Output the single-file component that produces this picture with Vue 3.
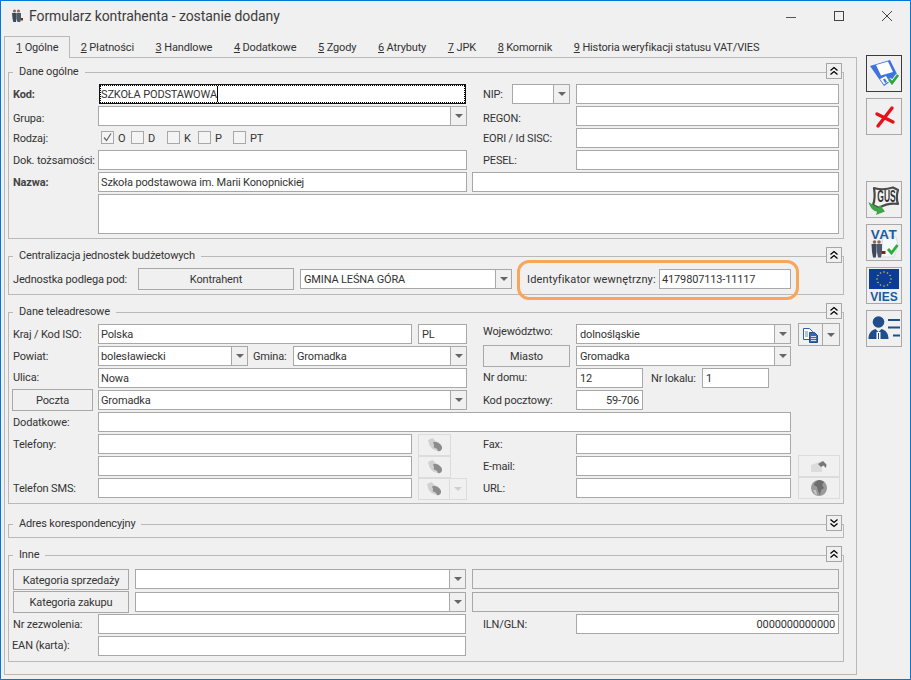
<script setup>
const tabs = [
  ['1', 'Ogólne'], ['2', 'Płatności'], ['3', 'Handlowe'], ['4', 'Dodatkowe'], ['5', 'Zgody'],
  ['6', 'Atrybuty'], ['7', 'JPK'], ['8', 'Komornik'], ['9', 'Historia weryfikacji statusu VAT/VIES'],
]
const stars = Array.from({ length: 12 }, (_, i) => {
  const a = (i * Math.PI) / 6
  return { x: 17 + 7 * Math.cos(a), y: 11 + 7 * Math.sin(a) }
})
</script>

<template>
  <div class="window">
    <header class="titlebar">
      <svg class="app-icon" width="12" height="14" viewBox="0 0 12 14">
        <circle cx="3.500" cy="2" r="1.600" fill="#8a6a58" /><circle cx="7.500" cy="2" r="1.600" fill="#8a6a58" />
        <path d="M1 4h4.500v5.500L5 13H2.300L1.500 9.500z" fill="#3c4a5c" />
        <path d="M5.500 4H10v5.500L9.300 13H6.500L5.500 9.500z" fill="#4c5a6e" />
        <rect x="9.500" y="9" width="2.500" height="2.500" fill="#7a3020" />
      </svg>
      <span class="title">Formularz kontrahenta - zostanie dodany</span>
      <div class="wincontrols">
        <svg width="48" height="32" viewBox="0 0 48 32"><path d="M20 16.500h10" stroke="#555" /></svg>
        <svg width="48" height="32" viewBox="0 0 48 32"><rect x="20.500" y="10.500" width="9" height="9" fill="none" stroke="#444" /></svg>
        <svg width="48" height="32" viewBox="0 0 48 32"><path d="M20 10l10 10M30 10L20 20" stroke="#444" /></svg>
      </div>
    </header>

    <div class="body">
      <main class="content">
        <nav class="tabs">
          <div v-for="(t, i) in tabs" :key="t[0]" class="tab" :class="{ active: i === 0 }"><u>{{ t[0] }}</u> {{ t[1] }}</div>
        </nav>

        <div class="panel">
          <section class="group g1">
            <span class="legend">Dane ogólne</span>
            <button class="chev"><svg width="14" height="14" viewBox="0 0 14 14"><path d="M3.500 6.500L7 3.500l3.500 3M3.500 10.500L7 7.500l3.500 3" fill="none" stroke="#000" stroke-width="1.300" /></svg></button>

            <label class="lbl bold r1 a">Kod:</label>
            <div class="field focus r1 b"><span>SZKOŁA PODSTAWOWA</span><i class="caret"></i></div>
            <label class="lbl r1 nipl">NIP:</label>
            <div class="field combo r1 nipc"><span></span><b class="arrow"></b></div>
            <div class="field r1 rt"></div>

            <label class="lbl dn r2 a">Grupa:</label>
            <div class="field combo r2 b"><span></span><b class="arrow"></b></div>
            <label class="lbl dn r2 nipw">REGON:</label>
            <div class="field r2 rt"></div>

            <label class="lbl r3 a">Rodzaj:</label>
            <div class="checks r3 b">
              <span class="chk"><i class="box on"><svg width="11" height="11" viewBox="0 0 11 11"><path d="M2 5.500l2.500 3L9 1.500" fill="none" stroke="#666" stroke-width="1.200" /></svg></i>O</span>
              <span class="chk"><i class="box"></i>D</span>
              <span class="chk"><i class="box"></i>K</span>
              <span class="chk"><i class="box"></i>P</span>
              <span class="chk"><i class="box"></i>PT</span>
            </div>
            <label class="lbl r3 nipw">EORI / Id SISC:</label>
            <div class="field r3 rt"></div>

            <label class="lbl r4 a">Dok. tożsamości:</label>
            <div class="field r4 b"></div>
            <label class="lbl r4 nipw">PESEL:</label>
            <div class="field r4 rt"></div>

            <label class="lbl bold r5 a">Nazwa:</label>
            <div class="field r5 b"><span>Szkoła podstawowa im. Marii Konopnickiej</span></div>
            <div class="field r5 name2"></div>

            <div class="field r6 wide"></div>
          </section>

          <section class="group g2">
            <span class="legend">Centralizacja jednostek budżetowych</span>
            <button class="chev"><svg width="14" height="14" viewBox="0 0 14 14"><path d="M3.500 6.500L7 3.500l3.500 3M3.500 10.500L7 7.500l3.500 3" fill="none" stroke="#000" stroke-width="1.300" /></svg></button>
            <label class="lbl">Jednostka podlega pod:</label>
            <button class="btn kontr">Kontrahent</button>
            <div class="field combo unit"><span class="pl">GMINA LEŚNA GÓRA</span><b class="arrow"></b></div>
            <label class="lbl idl">Identyfikator wewnętrzny:</label>
            <div class="field idf"><span>4179807113-11117</span></div>
            <div class="highlight"></div>
          </section>

          <section class="group g3">
            <span class="legend">Dane teleadresowe</span>
            <button class="chev"><svg width="14" height="14" viewBox="0 0 14 14"><path d="M3.500 6.500L7 3.500l3.500 3M3.500 10.500L7 7.500l3.500 3" fill="none" stroke="#000" stroke-width="1.300" /></svg></button>

            <label class="lbl r1 a">Kraj / Kod ISO:</label>
            <div class="field r1 kraj"><span>Polska</span></div>
            <div class="field r1 iso"><span class="pl">PL</span></div>
            <label class="lbl up3 r1 woj">Województwo:</label>
            <div class="field combo r1 wojc"><span class="pl">dolnośląskie</span><b class="arrow"></b></div>
            <div class="splitbtn r1 copy">
              <span class="ic"><svg width="18" height="16" viewBox="0 0 18 16"><path d="M1.500 1.500h6l3 3v8h-9z" fill="#fff" stroke="#2a5fb0" /><path d="M7.500 5.500h5l3 3v7h-8z" fill="#3568b8" stroke="#1f4c94" /><path d="M9 9.500h5M9 11.500h5M9 13.500h5" stroke="#fff" stroke-width=".8" /><path d="M3 5h3M3 7h3M3 9h3" stroke="#3568b8" stroke-width=".8" /></svg></span>
              <span class="dd"><b class="arrow"></b></span>
            </div>

            <label class="lbl r2 a">Powiat:</label>
            <div class="field combo r2 powiat"><span>bolesławiecki</span><b class="arrow"></b></div>
            <label class="lbl r2 gminal">Gmina:</label>
            <div class="field combo r2 gmina"><span class="pl">Gromadka</span><b class="arrow"></b></div>
            <button class="btn r2 miasto">Miasto</button>
            <div class="field combo r2 wojc"><span class="pl">Gromadka</span><b class="arrow"></b></div>

            <label class="lbl up r3 a">Ulica:</label>
            <div class="field r3 left"><span>Nowa</span></div>
            <label class="lbl up r3 woj">Nr domu:</label>
            <div class="field r3 dom"><span class="pl">12</span></div>
            <label class="lbl r3 lokl">Nr lokalu:</label>
            <div class="field r3 lok"><span class="pl">1</span></div>

            <button class="btn r4 poczta">Poczta</button>
            <div class="field combo r4 left"><span>Gromadka</span><b class="arrow"></b></div>
            <label class="lbl r4 woj">Kod pocztowy:</label>
            <div class="field r4 dom rightt"><span>59-706</span></div>

            <label class="lbl r5 a">Dodatkowe:</label>
            <div class="field r5 dod"></div>

            <label class="lbl r6 a">Telefony:</label>
            <div class="field r6 kraj"></div>
            <div class="dbtn r6 tel"><svg class="phone" width="16" height="15" viewBox="0 0 16 15"><path d="M1 2L5.500 0l3 3 3.500 2-1 4 .5 4.500L5.500 11 2.500 7.500z" fill="#d0d0d0" /><path d="M6 4.500c3.500-1.500 8 1 9 4.500.4 2.500-1.500 5-4 4-.3-2-1.500-3-4.500-3.800C7.500 8 7 6.500 6 4.500z" fill="#8c8c8c" /></svg></div>
            <label class="lbl r6 woj">Fax:</label>
            <div class="field r6 wojc"></div>

            <div class="field r7 kraj"></div>
            <div class="dbtn r7 tel"><svg class="phone" width="16" height="15" viewBox="0 0 16 15"><path d="M1 2L5.500 0l3 3 3.500 2-1 4 .5 4.500L5.500 11 2.500 7.500z" fill="#d0d0d0" /><path d="M6 4.500c3.500-1.500 8 1 9 4.500.4 2.500-1.500 5-4 4-.3-2-1.500-3-4.500-3.800C7.500 8 7 6.500 6 4.500z" fill="#8c8c8c" /></svg></div>
            <label class="lbl r7 woj">E-mail:</label>
            <div class="field r7 wojc"></div>
            <div class="dbtn r7 web"><svg width="18" height="14" viewBox="0 0 18 14"><path d="M1 13V6l11-4v11z" fill="#dcdcdc" /><path d="M8 5l5-3 3.500 3.500-.5 3.500-2.500-2.500L11 8z" fill="#777" /></svg></div>

            <label class="lbl r8 a">Telefon SMS:</label>
            <div class="field r8 kraj"></div>
            <div class="splitbtn dis r8 sms">
              <span class="ic"><svg class="phone" width="16" height="15" viewBox="0 0 16 15"><path d="M1 2L5.500 0l3 3 3.500 2-1 4 .5 4.500L5.500 11 2.500 7.500z" fill="#d0d0d0" /><path d="M6 4.500c3.500-1.500 8 1 9 4.500.4 2.500-1.500 5-4 4-.3-2-1.500-3-4.500-3.800C7.500 8 7 6.500 6 4.500z" fill="#8c8c8c" /></svg></span>
              <span class="dd"><b class="arrow light"></b></span>
            </div>
            <label class="lbl r8 woj">URL:</label>
            <div class="field r8 wojc"></div>
            <div class="dbtn r8 web"><svg width="18" height="18" viewBox="0 0 18 18"><circle cx="9" cy="9" r="8" fill="#9a9a9a" /><path d="M9 1c-3 1-5 3-5 5l3 2 1 4 2 4 1-5 3-2-2-3 2-3c-1-1-3-2-5-2z" fill="#6e6e6e" /><path d="M3 11l2 4 2 1-1-5z" fill="#c4c4c4" /></svg></div>
          </section>

          <section class="group g4">
            <span class="legend">Adres korespondencyjny</span>
            <button class="chev"><svg width="14" height="14" viewBox="0 0 14 14"><path d="M3.500 3.500L7 6.500l3.500-3M3.500 7.500L7 10.500l3.500-3" fill="none" stroke="#000" stroke-width="1.300" /></svg></button>
          </section>

          <section class="group g5">
            <span class="legend">Inne</span>
            <button class="chev"><svg width="14" height="14" viewBox="0 0 14 14"><path d="M3.500 6.500L7 3.500l3.500 3M3.500 10.500L7 7.500l3.500 3" fill="none" stroke="#000" stroke-width="1.300" /></svg></button>

            <button class="btn r1 kat">Kategoria sprzedaży</button>
            <div class="field combo r1 katc"><span></span><b class="arrow"></b></div>
            <div class="field off r1 katf"></div>

            <button class="btn r2 kat">Kategoria zakupu</button>
            <div class="field combo r2 katc"><span></span><b class="arrow"></b></div>
            <div class="field off r2 katf"></div>

            <label class="lbl r3 a">Nr zezwolenia:</label>
            <div class="field r3 b"></div>
            <label class="lbl r3 iln">ILN/GLN:</label>
            <div class="field r3 ilnf rightt"><span>0000000000000</span></div>

            <label class="lbl up r4 a ean">EAN (karta):</label>
            <div class="field r4 b"></div>
          </section>
        </div>
      </main>

      <aside class="toolbar">
        <button class="tool default">
          <svg width="34" height="35" viewBox="0 0 34 35">
            <path d="M3 10L23 4l8 16-14 10z" fill="#3f72dc" />
            <path d="M9 9l12-3.500 5 10.500-12 3.500z" fill="#fff" />
            <path d="M13 23l6-3 3 5-5 3.500z" fill="#fff" />
            <path d="M16 23.500l2-1 2 3.500-2 1z" fill="#3f72dc" />
            <path d="M22 23l3 4 6-8" fill="none" stroke="#fff" stroke-width="4.500" />
            <path d="M22 23l3 4 6-8" fill="none" stroke="#2aa838" stroke-width="2.800" />
          </svg>
        </button>
        <button class="tool">
          <svg width="34" height="35" viewBox="0 0 34 35">
            <path d="M25 9L11 27" stroke="#e4121a" stroke-width="3.400" stroke-linecap="round" />
            <path d="M10 15l16 8" stroke="#e4121a" stroke-width="3.400" stroke-linecap="round" />
          </svg>
        </button>
        <button class="tool gap">
          <svg width="34" height="35" viewBox="0 0 34 35">
            <path d="M7 6c5 1.500 13 1.500 19-.5l5 2.500c-1.500 5-1.500 10 0 14-7-1-14 1-19 4l-6-3c2-5 2-11 1-17z" fill="#f4f4f4" stroke="#4a4a4a" stroke-width="2.200" stroke-linejoin="round" />
            <text transform="translate(19.500 20) scale(.68 1.250)" text-anchor="middle" class="gus">GUS</text>
            <path d="M1.500 20l10 6 1.500-3 5 6.500-9 3.500 1-3.200C6 29 3 25.500 1.500 20z" fill="#3fa648" />
          </svg>
        </button>
        <button class="tool">
          <svg width="34" height="35" viewBox="0 0 34 35">
            <path d="M16 12h13l2 8-4 12H14z" fill="#f7f8fb" stroke="#d8dce4" />
            <text x="17" y="13.500" text-anchor="middle" class="vat">VAT</text>
            <circle cx="7.500" cy="17" r="1.800" fill="#8a6a58" /><circle cx="12" cy="17" r="1.800" fill="#8a6a58" />
            <path d="M4.500 19h5v8l-.7 5.500H6l-1-5.500z" fill="#3d4a5c" />
            <path d="M9.500 19H15v8l-1 5.500h-3l-1-5.500z" fill="#4d5a6e" />
            <rect x="14.500" y="26" width="4" height="3" fill="#6a3020" />
            <path d="M21 24l3.500 4 6-8" fill="none" stroke="#2dae3a" stroke-width="2.800" />
          </svg>
        </button>
        <button class="tool">
          <svg width="34" height="35" viewBox="0 0 34 35">
            <rect x="2" y="1" width="30" height="20" fill="#0b3d98" />
            <circle v-for="(s, i) in stars" :key="i" :cx="s.x" :cy="s.y" r=".8" fill="#e8c030" />
            <text x="17" y="33" text-anchor="middle" class="vies">VIES</text>
          </svg>
        </button>
        <button class="tool">
          <svg width="34" height="35" viewBox="0 0 34 35">
            <circle cx="11.500" cy="11" r="5.800" fill="#1f4e8c" />
            <path d="M1.500 28c0-6 3-9 7-10l3 3 3-3c4 1 7 4 7 10z" fill="#1f4e8c" />
            <path d="M9.500 21h4v7h-4z" fill="#fff" />
            <path d="M11 22h1v6h-1z" fill="#1f4e8c" />
            <path d="M21 9h12M21 16.500h12M26 24.500h7" stroke="#1f4e8c" stroke-width="2.200" />
          </svg>
        </button>
      </aside>
    </div>
  </div>
</template>

<style>
html, body { margin: 0; padding: 0; background: #f0f0f0; }
</style>

<style scoped>
.window {
  box-sizing: border-box;
  width: 911px;
  height: 680px;
  border: 1px solid #0078d7;
  background: #f0f0f0;
  overflow: hidden;
  font: 11px/20px Roboto, "Noto Sans", sans-serif;
  letter-spacing: -0.15px;
  color: #333;
}
.titlebar { display: flex; align-items: center; height: 35px; }
.app-icon { margin: -5px 6px 0 10px; }
.title { font-size: 14px; letter-spacing: -0.08px; color: #3c3c3c; margin-top: -5px; white-space: nowrap; }
.wincontrols { display: flex; margin-left: auto; margin-top: -4px; }
.body { display: flex; }
.content { width: 853px; margin-left: 3px; }
.tabs { display: flex; height: 21px; position: relative; z-index: 1; }
.tab { padding: 2px 10.85px 0; line-height: 20px; white-space: nowrap; }
.tab.active { box-sizing: border-box; height: 22px; border: 1px solid #b9b9b9; border-bottom: 0; background: #f0f0f0; padding: 1px 10.5px 0 11px; }
.panel { box-sizing: border-box; height: 618px; border: 1px solid #b9b9b9; padding: 14px 0 0 3px; }

.group { position: relative; box-sizing: border-box; width: 836px; border: 1px solid #b9b9b9; display: grid; padding-left: 4px; }
.legend { position: absolute; left: 4px; top: -11px; padding: 0 6px; background: #f0f0f0; line-height: 20px; white-space: nowrap; }
.chev { position: absolute; right: 1px; top: -10px; width: 16px; height: 16px; padding: 0; border: 1px solid #a6a6a6; background: #f0f0f0; display: flex; align-items: center; justify-content: center; }
.chev svg { display: block; }

.r1 { grid-row: 1; } .r2 { grid-row: 2; } .r3 { grid-row: 3; } .r4 { grid-row: 4; }
.r5 { grid-row: 5; } .r6 { grid-row: 6; } .r7 { grid-row: 7; } .r8 { grid-row: 8; }

.g1 { padding-top: 11px; padding-bottom: 4px;
  grid-template-columns: 85px 369px 5px 11px 29px 58px 6px 263px;
  grid-template-rows: 20px 20px 20px 20px 20px 40px; row-gap: 2px; }
.g1 .a { grid-column: 1; }
.g1 .b { grid-column: 2; }
.g1 .nipl { grid-column: 4 / 6; padding-left: 11px; }
.g1 .nipw { grid-column: 4 / 8; padding-left: 11px; }
.g1 .nipc { grid-column: 6; }
.g1 .rt { grid-column: 8; }
.g1 .name2 { grid-column: 4 / 9; }
.g1 .wide { grid-column: 2 / 9; }

.g2 { margin-top: 17px; padding-top: 12px; padding-bottom: 5px; height: 39px;
  grid-template-columns: 125px 156px 6px 212px 147px 132px 1fr; grid-template-rows: 20px; }
.g2 .lbl { grid-column: 1; }
.g2 .kontr { grid-column: 2; margin: -1px 0; height: 22px; }
.g2 .unit { grid-column: 4; }
.g2 .idl { grid-column: 5; padding-left: 15px; letter-spacing: .14px; }
.g2 .idf { grid-column: 6; }
.highlight { position: absolute; left: 508px; top: 3px; width: 282px; height: 40px; box-sizing: border-box; border: 3px solid #f9a55c; border-radius: 12px; pointer-events: none; }

.g3 { margin-top: 17px; padding-top: 11px; padding-bottom: 5px;
  grid-template-columns: 85px 150px 5px 40px 119px 6px 33px 16px 16px 87px 6px 67px 8px 51px 67px 22px 7px 42px;
  grid-template-rows: repeat(8, 20px); row-gap: 2px; }
.g3 .a { grid-column: 1; }
.g3 .kraj { grid-column: 2 / 6; }
.g3 .iso { grid-column: 7 / 9; }
.g3 .woj { grid-column: 10 / 12; }
.g3 .wojc { grid-column: 12 / 17; }
.g3 .copy { grid-column: 18; margin: -1px 0 -2px; height: 23px; }
.g3 .powiat { grid-column: 2; }
.g3 .gminal { grid-column: 4; }
.g3 .gmina { grid-column: 5 / 9; }
.g3 .miasto { grid-column: 10; margin: -1px 0; height: 22px; }
.g3 .left { grid-column: 2 / 9; }
.g3 .dom { grid-column: 12; }
.g3 .lokl { grid-column: 14; }
.g3 .lok { grid-column: 15; }
.g3 .poczta { grid-column: 1; margin: -1px 5px -1px -1px; height: 22px; }
.g3 .dod { grid-column: 2 / 17; }
.g3 .tel { grid-column: 7; margin-bottom: -2px; height: 22px; }
.g3 .sms { grid-column: 7 / 9; height: 22px; margin-bottom: -2px; }
.g3 .web { grid-column: 18; margin-top: -1px; height: 22px; }

.g4 { margin-top: 20px; height: 14px; }

.g5 { margin-top: 17px; padding-top: 13px; padding-bottom: 5px;
  grid-template-columns: 85px 31px 6px 331px 6px 11px 93px 263px;
  grid-template-rows: 23px 22px 22px 20px; }
.g5 .a { grid-column: 1; }
.g5 .kat { grid-column: 1 / 3; height: 21px; }
.g5 .r2.kat { height: 22px; margin-top: -1px; }
.g5 .katc { grid-column: 4; }
.g5 .katf { grid-column: 6 / 9; }
.g5 .field { height: 20px; }
.g5 .b { grid-column: 2 / 5; }
.g5 .iln { grid-column: 6 / 8; padding-left: 11px; }
.g5 .ilnf { grid-column: 8; }
.g5 .ean { margin-left: -1px; }

.lbl { display: block; padding-top: 1px; line-height: 20px; white-space: nowrap; }
.lbl.bold { font-weight: 700; color: #444; }
.lbl.dn { padding-top: 3px; }
.lbl.up { margin-top: -1px; }
.lbl.up3 { margin-top: -3px; }

.field { box-sizing: border-box; height: 100%; border: 1px solid #a8a8a8; background: #fff; display: flex; align-items: center; min-width: 0; }
.field > span { flex: 1; padding: 1px 0 0 2px; line-height: 17px; white-space: nowrap; }
.field > span.pl { padding-left: 3px; }
.field.rightt > span { text-align: right; padding: 1px 3px 0 0; }
.field.off { background: #f0f0f0; }
.field.focus { margin: 0 1px; border: 1px solid #111; outline: 1px dotted #000; outline-offset: -2px; }
.field.focus > span { flex: none; padding-left: 1px; }
.caret { display: block; width: 1px; height: 16px; background: #000; }
.combo > .arrow { flex: 0 0 16px; align-self: stretch; background: #f0f0f0; border-left: 1px solid #a8a8a8; box-sizing: border-box; position: relative; }
.arrow::after { content: ""; position: absolute; left: 50%; top: 50%; margin: -2px 0 0 -4px; border: 4px solid transparent; border-top-color: #666; border-bottom: 0; }
.dd .arrow { display: block; position: relative; width: 100%; height: 100%; }
.arrow.light::after { border-top-color: #cfcfcf; }

.checks { display: grid; grid-template-columns: 30px 36px 31px 35px auto; padding-left: 3px; }
.chk { display: flex; align-items: flex-start; gap: 4px; padding-top: 1px; }
.box { box-sizing: border-box; width: 13px; height: 13px; margin-top: 2px; border: 1px solid #a8a8a8; background: #f4f4f4; display: flex; align-items: center; justify-content: center; }

.btn { box-sizing: border-box; padding: 2px 0 0; border: 1px solid #a8a8a8; background: #f0f0f0; font: inherit; letter-spacing: inherit; color: #333; line-height: 18px; white-space: nowrap; }
.dbtn { box-sizing: border-box; border: 1px solid #dcdcdc; background: #f0f0f0; display: flex; align-items: center; justify-content: center; }
.splitbtn { box-sizing: border-box; display: flex; border: 1px solid #a8a8a8; }
.splitbtn .ic { flex: 1; display: flex; align-items: center; justify-content: center; border-right: 1px solid #a8a8a8; }
.splitbtn .dd { flex: 0 0 16px; }
.splitbtn.dis, .splitbtn.dis .ic { border-color: #dcdcdc; }

.toolbar { margin: 19px 0 0 9px; display: flex; flex-direction: column; gap: 6px; }
.tool { box-sizing: border-box; width: 36px; height: 37px; padding: 0; border: 1px solid #a8a8a8; background: #f0f0f0; }
.tool svg { display: block; }
.tool.default { border-color: #3c3c3c; }
.tool.gap { margin-top: 40px; }
.gus { font: 700 12.5px "Liberation Sans", sans-serif; fill: #333; letter-spacing: 0; }
.vat { font: 700 13.5px "Liberation Sans", sans-serif; fill: #1b5a9e; letter-spacing: .5px; }
.vies { font: 700 12px "Liberation Sans", sans-serif; fill: #1b5a9e; letter-spacing: 0; }
</style>
